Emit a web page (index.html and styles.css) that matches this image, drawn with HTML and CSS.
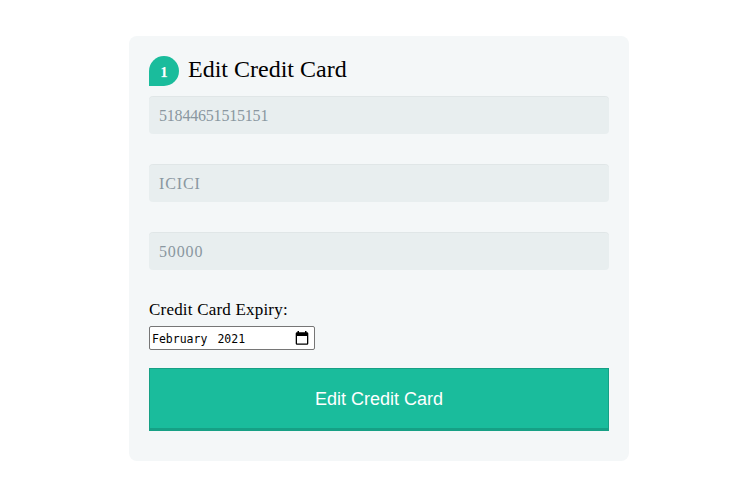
FILE: index.html
```html
<!DOCTYPE html>
<html lang="en">
<head>
<meta charset="utf-8">
<title>Edit Credit Card</title>
<link rel="stylesheet" href="styles.css">
</head>
<body>
<form class="card">
  <div class="legend"><span class="number">1</span><span class="title">Edit Credit Card</span></div>
  <div class="field"><span class="digits">51844651515151</span></div>
  <div class="field"><span class="bank">ICICI</span></div>
  <div class="field"><span class="amount">50000</span></div>
  <div class="label"><span>Credit Card Expiry:</span></div>
  <div class="month"><span class="month-name">February</span><span class="year">2021</span>
    <svg class="calendar" width="14" height="15" viewBox="0 0 14 15"><path fill="#000" fill-rule="evenodd" d="M2.5 0h1.500v1.200h6V0h1.500v1.200h.5a1.300 1.300 0 0 1 1.300 1.300v10a1.300 1.300 0 0 1-1.300 1.300H2A1.300 1.300 0 0 1 .7 12.500v-10A1.300 1.300 0 0 1 2 1.200h.5zM2 5v7.500h10V5z"/></svg>
  </div>
  <button class="submit" type="button"><span>Edit Credit Card</span></button>
</form>
</body>
</html>
```
FILE: styles.css
```css
* { box-sizing: border-box; }
body { margin: 0; background: #fff; font-family: Georgia, "Liberation Serif", serif; }
.card { width: 500px; height: 425px; margin: 36px 0 0 129px; padding: 20px; background: #f4f7f8; border-radius: 8px; }
.legend { display: flex; height: 30px; margin-bottom: 10px; align-items: center; }
.number { width: 30px; height: 30px; margin-right: 9px; border-radius: 15px 15px 15px 0; background: #1abc9c; color: #fff; font-size: 15px; font-weight: bold; line-height: 32px; text-align: center; text-shadow: 0 1px 0 rgba(255,255,255,.2); }
.title { font-size: 24px; line-height: 28px; white-space: nowrap; padding-bottom: 5px; }
.field { display: flex; align-items: center; height: 38px; margin-bottom: 30px; padding: 2px 10px 0; border-radius: 4px; background: #e8eeef; box-shadow: 0 1px 0 rgba(0,0,0,.03) inset; color: #8a97a0; font-size: 16px; line-height: 20px; }
.digits { letter-spacing: -.2px; }
.bank, .amount { letter-spacing: .85px; }
.label { height: 26px; font-size: 17px; line-height: 20px; letter-spacing: .2px; }
.month { display: flex; align-items: center; width: 166px; height: 24px; padding: 2px 5px 0 2px; border: 1px solid #767676; border-radius: 2px; background: #fff; font: 11.5px/16px "DejaVu Sans Mono", monospace; }
.year { margin-left: 10px; }
.calendar { margin: -2px 0 0 auto; }
.submit { display: block; width: 460px; height: 63px; margin: 18px 0 0; padding: 1px 0 0; border: 1px solid #16a085; border-bottom-width: 3px; background: #1abc9c; color: #fff; font: 18px "Liberation Sans", Arial, sans-serif; }
```
